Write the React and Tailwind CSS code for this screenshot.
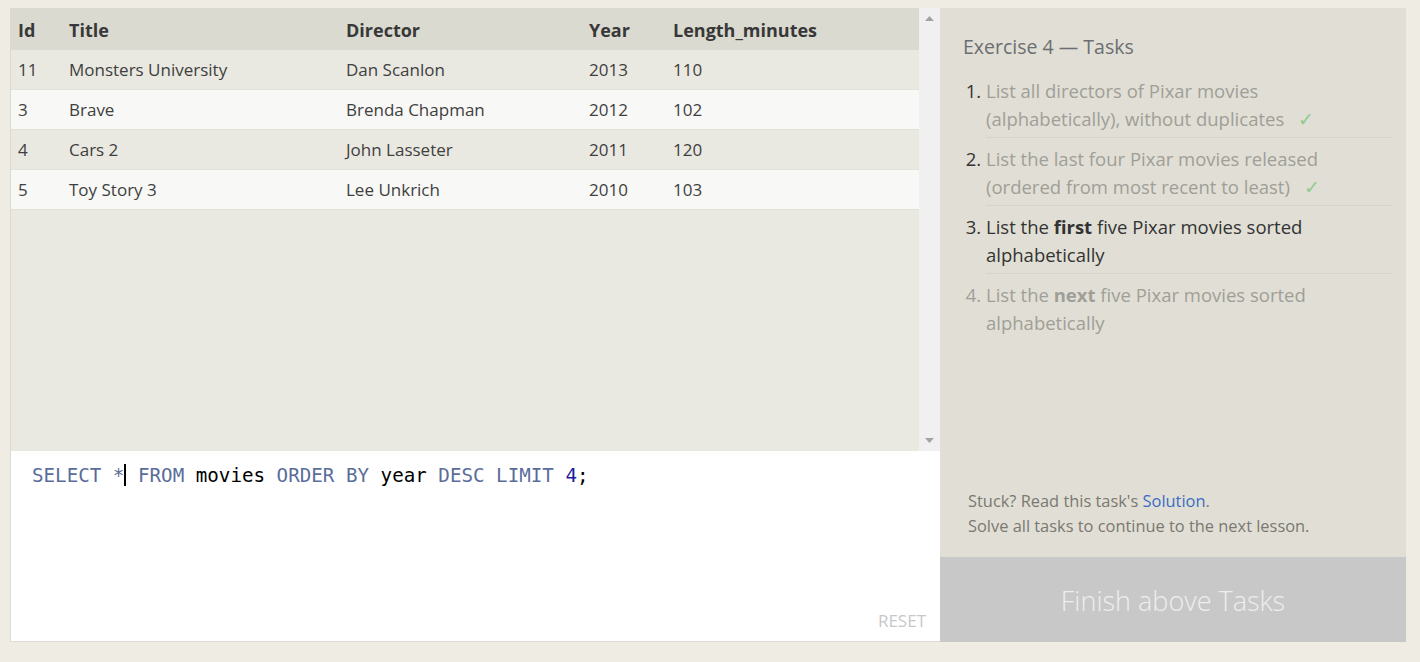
import React from "react";

const rows = [
  ["11", "Monsters University", "Dan Scanlon", "2013", "110"],
  ["3", "Brave", "Brenda Chapman", "2012", "102"],
  ["4", "Cars 2", "John Lasseter", "2011", "120"],
  ["5", "Toy Story 3", "Lee Unkrich", "2010", "103"],
];

const cols = ["w-[51px]", "w-[277px]", "w-[243px]", "w-[84px]", "flex-1"];
const heads = ["Id", "Title", "Director", "Year", "Length_minutes"];

function Check() {
  return <span className="ml-[14px] text-[#8fcb8f]">✓</span>;
}

export default function App() {
  return (
    <div className="h-[662px] w-[1420px] bg-[#efece4] pt-[8px] pl-[10px] font-['Open_Sans',sans-serif] overflow-hidden">
      <div className="flex h-[634px]">
        {/* Left panel */}
        <div className="flex w-[930px] flex-col border-l border-[#dcdad2]">
          <div className="flex h-[443px]">
            <div className="flex-1 bg-[#e9e8e1] text-[17px] text-[#3f3f3f]">
              <div className="flex h-[42px] items-center bg-[#dbdad0] pt-[3px] text-[18px] font-bold text-[#383838]">
                {heads.map((h, i) => (
                  <div key={h} className={`${cols[i]} pl-[7px]`}>{h}</div>
                ))}
              </div>
              {rows.map((r, ri) => (
                <div
                  key={ri}
                  className={`flex h-[40px] items-center border-b border-[#e2e1da] pt-[1px] ${ri % 2 === 0 ? "bg-[#e9e8e1]" : "bg-[#f8f8f6]"}`}
                >
                  {r.map((c, i) => (
                    <div key={i} className={`${cols[i]} pl-[7px]`}>{c}</div>
                  ))}
                </div>
              ))}
            </div>
            <div className="flex w-[21px] flex-col items-center justify-between bg-[#f0f0f0] py-[8px]">
              <svg width="9" height="5" viewBox="0 0 9 5"><path d="M0 5 L4.5 0 L9 5 Z" fill="#a3a3a3" /></svg>
              <svg width="9" height="5" viewBox="0 0 9 5"><path d="M0 0 L4.5 5 L9 0 Z" fill="#a3a3a3" /></svg>
            </div>
          </div>
          <div className="flex flex-1 flex-col border-b border-[#dcdad2] bg-white pl-[21px] pr-[14px] pt-[9px] pb-[8px]">
            <div className="font-['DejaVu_Sans_Mono',monospace] text-[19.2px] leading-[24px] whitespace-pre">
              <span className="text-[#5a6d9a]">SELECT *</span>
              <span className="inline-block h-[22px] w-[2px] translate-y-[4px] bg-black"></span>
              <span className="text-[#5a6d9a]"> FROM</span>
              <span className="text-black"> movies </span>
              <span className="text-[#5a6d9a]">ORDER BY</span>
              <span className="text-black"> year </span>
              <span className="text-[#5a6d9a]">DESC LIMIT</span>
              <span className="text-[#1c1ca0]"> 4</span>
              <span className="text-black">;</span>
            </div>
            <div className="flex-1"></div>
            <div className="self-end font-['Liberation_Sans_Narrow','Open_Sans',sans-serif] text-[17px] text-[#c8c8c8]">RESET</div>
          </div>
        </div>
        {/* Right panel */}
        <div className="flex w-[466px] flex-col">
          <div className="flex flex-1 flex-col bg-[#e1dfd5] pl-[23px] pr-[13px] pt-[25px] pb-[19px]">
            <div className="text-[19.5px] leading-[28px] text-[#6b6e72]">Exercise 4 — Tasks</div>
            <ol className="mt-[9px] list-decimal pl-[23px] text-[18.5px] leading-[28px] whitespace-nowrap">
              <li className="border-b border-[#d6d4ca] pt-[7px] pb-[4px] text-[#333]">
                <span className="text-[#a09e98]">List all directors of Pixar movies<br />(alphabetically), without duplicates</span>
                <Check />
              </li>
              <li className="border-b border-[#d6d4ca] pt-[7px] pb-[4px] text-[#333]">
                <span className="text-[#a09e98]">List the last four Pixar movies released<br />(ordered from most recent to least)</span>
                <Check />
              </li>
              <li className="border-b border-[#d6d4ca] pt-[7px] pb-[4px] text-[#333]">
                List the <b>first</b> five Pixar movies sorted<br />alphabetically
              </li>
              <li className="pt-[7px] pb-[4px] text-[#a09e98]">
                List the <b>next</b> five Pixar movies sorted<br />alphabetically
              </li>
            </ol>
            <div className="flex-1"></div>
            <div className="pl-[5px] text-[16.4px] leading-[25px] text-[#7a7872]">
              <div>
                Stuck? Read this task's <span className="text-[#3b6cc4]">Solution</span>.
              </div>
              <div>Solve all tasks to continue to the next lesson.</div>
            </div>
          </div>
          <div className="flex h-[85px] items-center justify-center bg-[#c8c8c8] pt-[3px] text-[27px] font-light text-[#eeeeee]">
            Finish above Tasks
          </div>
        </div>
      </div>
    </div>
  );
}
